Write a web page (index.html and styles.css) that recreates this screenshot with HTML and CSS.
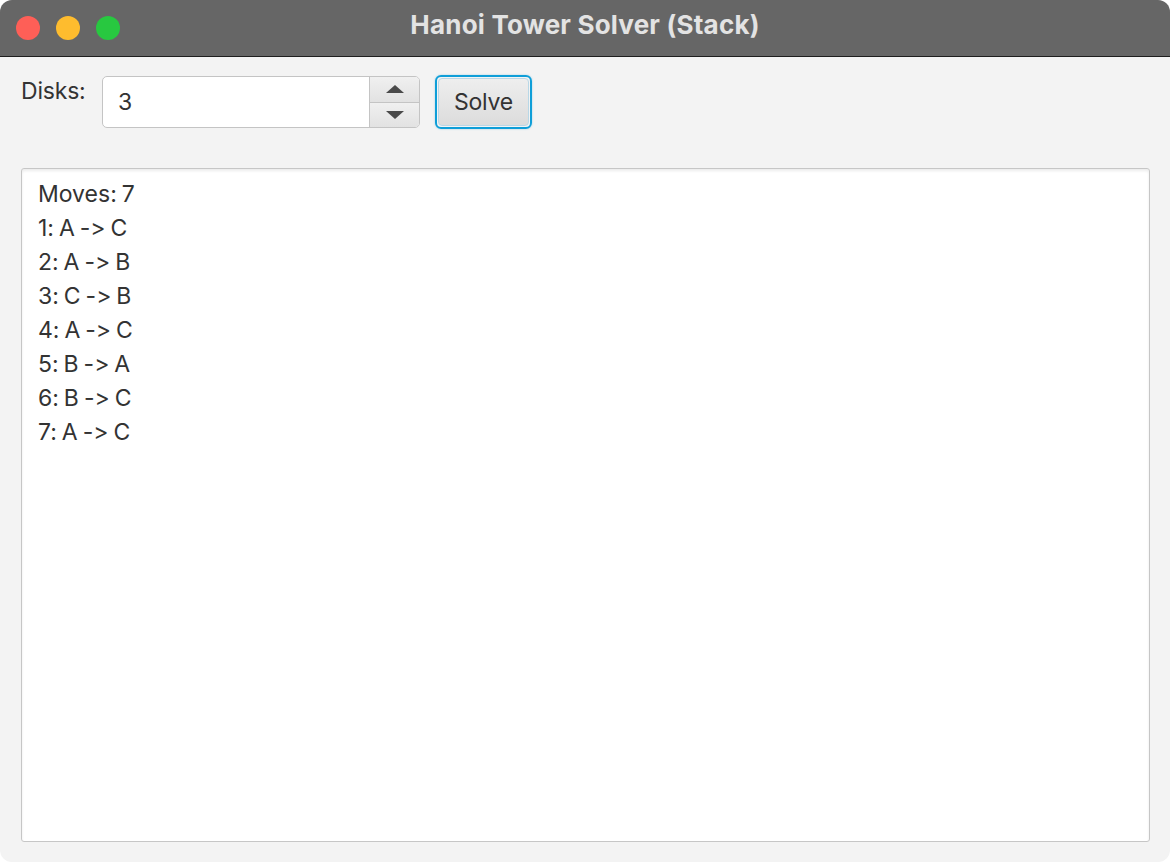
FILE: index.html
```html
<!DOCTYPE html>
<html>
<head>
<meta charset="utf-8">
<title>Hanoi Tower Solver (Stack)</title>
<link rel="stylesheet" href="styles.css">
</head>
<body>
<div class="window">
  <div class="titlebar">
    <div class="lights">
      <span class="light red"></span>
      <span class="light yellow"></span>
      <span class="light green"></span>
    </div>
    <div class="title">Hanoi Tower Solver (Stack)</div>
  </div>
  <div class="content">
    <div class="toolbar">
      <label class="label">Disks:</label>
      <div class="spinner">
        <div class="spin-field">3</div>
        <div class="spin-arrows">
          <div class="spin-btn up"><span class="tri-up"></span></div>
          <div class="spin-btn down"><span class="tri-down"></span></div>
        </div>
      </div>
      <div class="solve-ring"><button class="solve">Solve</button></div>
    </div>
    <div class="output">
      <div class="line">Moves: 7</div>
      <div class="line">1: A -&gt; C</div>
      <div class="line">2: A -&gt; B</div>
      <div class="line">3: C -&gt; B</div>
      <div class="line">4: A -&gt; C</div>
      <div class="line">5: B -&gt; A</div>
      <div class="line">6: B -&gt; C</div>
      <div class="line">7: A -&gt; C</div>
    </div>
  </div>
</div>
</body>
</html>
```

FILE: styles.css
```css
* { box-sizing: border-box; }
html, body { margin: 0; padding: 0; background: #ffffff; }
body {
  font-family: Inter, "Liberation Sans", sans-serif;
  color: #333333;
  font-feature-settings: "calt" 0, "liga" 0;
  font-variant-ligatures: none;
}

.window {
  width: 1170px;
  height: 862px;
  border-radius: 12px;
  overflow: hidden;
  background: #f3f3f3;
  display: flex;
  flex-direction: column;
}

.titlebar {
  height: 57px;
  background: #666666;
  border-bottom: 1px solid #1e1e1e;
  display: flex;
  align-items: center;
  position: relative;
  flex: none;
}
.lights {
  display: flex;
  gap: 16px;
  padding-left: 16px;
}
.light {
  width: 24px;
  height: 24px;
  border-radius: 50%;
  display: block;
}
.red { background: #fe5f57; }
.yellow { background: #febc2e; }
.green { background: #28c840; }
.title {
  position: absolute;
  left: 0; right: 0; top: 0; bottom: 0;
  display: flex;
  align-items: center;
  justify-content: center;
  color: #e3e3e3;
  font-weight: 700;
  font-size: 26px;
  letter-spacing: 0.2px;
  margin-top: -8px;
}

.content {
  flex: 1;
  display: flex;
  flex-direction: column;
  padding: 19px 20px 20px 21px;
  min-height: 0;
}

.toolbar {
  display: flex;
  align-items: flex-start;
  height: 53px;
  flex: none;
}
.label {
  font-size: 23px;
  margin-top: 1px;
  width: 81px;
  color: #333;
  letter-spacing: -0.2px;
}
.spinner {
  width: 318px;
  height: 52px;
  display: flex;
  border: 1px solid #c4c4c4;
  border-radius: 5px;
  background: #ffffff;
  overflow: hidden;
}
.spin-field {
  flex: 1;
  font-size: 23px;
  padding-left: 15px;
  display: flex;
  align-items: center;
  color: #333;
}
.spin-arrows {
  width: 50px;
  display: flex;
  flex-direction: column;
  border-left: 1px solid #c4c4c4;
}
.spin-btn {
  flex: 1;
  background: linear-gradient(#f0f0f0, #e2e2e2);
  display: flex;
  align-items: center;
  justify-content: center;
}
.spin-btn.up { border-bottom: 1px solid #c4c4c4; }
.tri-up {
  width: 0; height: 0;
  border-left: 9px solid transparent;
  border-right: 9px solid transparent;
  border-bottom: 8px solid #4a4a4a;
}
.tri-down {
  width: 0; height: 0;
  border-left: 9px solid transparent;
  border-right: 9px solid transparent;
  border-top: 8px solid #4a4a4a;
}

.solve-ring {
  margin-left: 15px;
  margin-top: -1px;
  width: 97px;
  height: 54px;
  border: 2px solid #0e9ed8;
  border-radius: 6px;
  box-shadow: 0 0 2px rgba(14,158,216,0.4);
  padding: 1px;
}
.solve {
  width: 100%;
  height: 100%;
  border: 1px solid #b9d7e6;
  border-radius: 4px;
  background: linear-gradient(#eeeeee, #dcdcdc);
  font-family: inherit;
  font-size: 23px;
  letter-spacing: -0.2px;
  color: #333;
  padding: 0;
}

.output {
  margin-top: 39px;
  flex: 1;
  background: #ffffff;
  border: 1px solid #c6c6c6;
  border-radius: 3px;
  box-shadow: inset 0 2px 3px rgba(0,0,0,0.08);
  padding: 8px 16px;
}
.line {
  font-size: 23px;
  line-height: 34px;
  color: #333;
  letter-spacing: 0;
  word-spacing: -1.5px;
}
```
